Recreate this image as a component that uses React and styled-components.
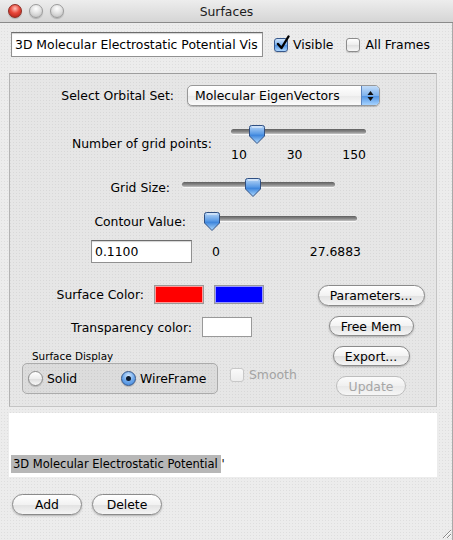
import React from 'react';
import styled, { createGlobalStyle } from 'styled-components';

const GlobalStyle = createGlobalStyle`
  html, body { margin: 0; padding: 0; background: #ececec; }
  body {
    font-family: "DejaVu Sans", Verdana, sans-serif;
    font-size: 12.4px;
    color: #000;
  }
  * { box-sizing: border-box; }
`;

const Window = styled.div`
  width: 453px;
  height: 540px;
  display: flex;
  flex-direction: column;
  position: relative;
  overflow: hidden;
  background-color: #ececec;
  background-image: radial-gradient(circle, rgba(0, 0, 0, 0.06) 0.6px, transparent 0.9px);
  background-size: 3px 3px;
  box-shadow: inset -1px 0 0 #a9a9a9;
`;

const TitleBar = styled.div`
  height: 23px;
  flex-shrink: 0;
  display: grid;
  grid-template-columns: 1fr auto 1fr;
  align-items: center;
  background: linear-gradient(#ededed, #d5d5d5);
  border-bottom: 1px solid #8a8a8a;
`;

const Lights = styled.div`
  display: flex;
  gap: 7px;
  padding-left: 8px;
`;

const Light = styled.span`
  width: 14px;
  height: 14px;
  border-radius: 50%;
  border: 1px solid ${p => (p.$red ? '#8d2b22' : '#9b9b9b')};
  background: ${p =>
    p.$red
      ? 'radial-gradient(circle at 50% 30%, #ffc2ba 0, #e8473a 45%, #a51d14 100%)'
      : 'radial-gradient(circle at 50% 30%, #ffffff 0, #e2e2e2 45%, #b9b9b9 100%)'};
  box-shadow: 0 1px 1px rgba(0, 0, 0, 0.2);
`;

const Title = styled.div`
  font-size: 12.4px;
  color: #1c1c1c;
`;

const Body = styled.div`
  flex: 1;
  display: flex;
  flex-direction: column;
  padding: 9px 16px 0 9px;
`;

const TopRow = styled.div`
  display: flex;
  align-items: center;
  height: 25px;
  padding-left: 2px;
`;

const TextField = styled.input`
  width: ${p => p.$w}px;
  height: ${p => p.$h}px;
  flex-shrink: 0;
  border: 1px solid #909090;
  border-top-color: #6c6c6c;
  box-shadow: inset 0 1px 1px rgba(0, 0, 0, 0.18);
  background: #fff;
  font: inherit;
  color: #000;
  padding: 0 3px;
  outline: none;
`;

const CheckLabel = styled.label`
  display: inline-flex;
  align-items: center;
  gap: 5px;
  margin-left: ${p => p.$ml || 0}px;
  color: ${p => (p.$disabled ? '#a3a3a3' : '#000')};
  white-space: nowrap;
`;

const Box = styled.span`
  width: 14px;
  height: 14px;
  position: relative;
  flex-shrink: 0;
  border-radius: 3px;
  border: 1px solid ${p => (p.$checked ? '#38598c' : p.$disabled ? '#c8c8c8' : '#8c8c8c')};
  background: ${p =>
    p.$checked
      ? 'linear-gradient(#cfe4fb, #79b0ee 50%, #4b8fe1 51%, #aed7ff)'
      : p.$disabled
      ? 'linear-gradient(#fafafa, #ededed)'
      : 'linear-gradient(#ffffff, #ececec 50%, #dfdfdf 51%, #f7f7f7)'};
  box-shadow: ${p => (p.$disabled ? 'none' : '0 1px 1px rgba(0,0,0,0.15)')};
`;

const Tick = styled.svg`
  position: absolute;
  left: 1px;
  top: -4px;
`;

function Check({ checked, disabled, children, ml }) {
  return (
    <CheckLabel $ml={ml} $disabled={disabled}>
      <Box $checked={checked} $disabled={disabled}>
        {checked && (
          <Tick width="14" height="16" viewBox="0 0 14 16">
            <path d="M2 9 L5.5 13 L12.5 1.5" fill="none" stroke="#000" strokeWidth="2.4" strokeLinecap="round" strokeLinejoin="round" />
          </Tick>
        )}
      </Box>
      {children}
    </CheckLabel>
  );
}

const GroupBox = styled.div`
  margin-top: 16px;
  width: 428px;
  height: 334px;
  flex-shrink: 0;
  display: flex;
  flex-direction: column;
  border: 1px solid #c4c4c4;
  border-top-color: #9d9d9d;
  border-left-color: #b3b3b3;
  background: rgba(0, 0, 0, 0.025);
`;

const FormRow = styled.div`
  display: flex;
  align-items: center;
  gap: ${p => p.$gap || 0}px;
  margin-top: ${p => p.$mt || 0}px;
  padding-left: ${p => p.$pl || 0}px;
`;

const Label = styled.span`
  width: ${p => p.$w}px;
  flex-shrink: 0;
  text-align: right;
  white-space: nowrap;
`;

const Popup = styled.div`
  width: 193px;
  height: 21px;
  display: flex;
  align-items: center;
  border: 1px solid #989898;
  border-radius: 5px;
  overflow: hidden;
  background: linear-gradient(#ffffff, #f3f3f3 50%, #e9e9e9 51%, #fbfbfb);
  box-shadow: 0 1px 1px rgba(0, 0, 0, 0.2);
`;

const PopupText = styled.span`
  flex: 1;
  padding-left: 7px;
  white-space: nowrap;
`;

const PopupArrows = styled.span`
  width: 18px;
  align-self: stretch;
  display: flex;
  align-items: center;
  justify-content: center;
  border-left: 1px solid #5d85bf;
  background: linear-gradient(#c2dcf8, #7fb3ee 50%, #4d91e2 51%, #a6d3ff);
`;

const SliderBox = styled.div`
  width: ${p => p.$w}px;
  flex-shrink: 0;
`;

const TrackArea = styled.div`
  position: relative;
  height: 19px;
  padding-top: 4px;
`;

const Track = styled.div`
  height: 5px;
  border-radius: 3px;
  background: linear-gradient(#5f5f5f, #8d8d8d 60%, #c4c4c4);
  box-shadow: 0 1px 0 rgba(255, 255, 255, 0.7);
`;

const Thumb = styled.svg`
  position: absolute;
  top: 0;
  left: ${p => p.$x - 8}px;
`;

const Ticks = styled.div`
  display: flex;
  justify-content: space-between;
  margin-top: 3px;
  line-height: 15px;
`;

function Slider({ width, pos, ticks }) {
  return (
    <SliderBox $w={width}>
      <TrackArea>
        <Track />
        <Thumb $x={pos} width="16" height="19" viewBox="0 0 16 19">
          <defs>
            <linearGradient id="thumbFill" x1="0" y1="0" x2="0" y2="1">
              <stop offset="0" stopColor="#bcd8f7" />
              <stop offset="0.45" stopColor="#5c9ce6" />
              <stop offset="0.55" stopColor="#3f86dc" />
              <stop offset="1" stopColor="#b2dcff" />
            </linearGradient>
          </defs>
          <path
            d="M2.5 0.5 H13.5 Q15.5 0.5 15.5 2.5 V11 L8 18.5 L0.5 11 V2.5 Q0.5 0.5 2.5 0.5 Z"
            fill="url(#thumbFill)"
            stroke="#2f4f82"
            strokeWidth="1"
          />
          <path d="M3 2 H13" stroke="rgba(255,255,255,0.8)" strokeWidth="1" />
        </Thumb>
      </TrackArea>
      {ticks && (
        <Ticks>
          {ticks.map(t => (
            <span key={t}>{t}</span>
          ))}
        </Ticks>
      )}
    </SliderBox>
  );
}

const Range = styled.div`
  width: 149px;
  display: flex;
  justify-content: space-between;
`;

const Lower = styled.div`
  display: flex;
  margin-top: 22px;
`;

const LeftCol = styled.div`
  width: 301px;
  display: flex;
  flex-direction: column;
`;

const RightCol = styled.div`
  width: 120px;
  display: flex;
  flex-direction: column;
  align-items: center;
  gap: 10px;
`;

const Swatch = styled.span`
  width: 50px;
  height: ${p => p.$h || 19}px;
  flex-shrink: 0;
  background: ${p => p.$color};
  border: 1px solid #999;
  box-shadow: inset 0 0 0 1px rgba(255, 255, 255, 0.6);
`;

const DisplayGroup = styled.div`
  display: flex;
  flex-direction: column;
`;

const Caption = styled.span`
  font-size: 10.4px;
  line-height: 13px;
  padding-left: 10px;
`;

const RadioBox = styled.div`
  width: 196px;
  height: 31px;
  display: flex;
  align-items: center;
  padding-left: 5px;
  border: 1px solid #ababab;
  border-radius: 5px;
  background: rgba(0, 0, 0, 0.045);
`;

const RadioOption = styled.label`
  display: inline-flex;
  align-items: center;
  gap: 4px;
  width: ${p => (p.$w ? `${p.$w}px` : 'auto')};
  white-space: nowrap;
`;

const RadioDot = styled.span`
  width: 15px;
  height: 15px;
  border-radius: 50%;
  flex-shrink: 0;
  display: flex;
  align-items: center;
  justify-content: center;
  border: 1px solid ${p => (p.$on ? '#34568a' : '#8a8a8a')};
  background: ${p =>
    p.$on
      ? 'radial-gradient(circle at 50% 30%, #d6e9fc 0, #6fa9ec 50%, #3c82d8 100%)'
      : 'linear-gradient(#ffffff, #ededed 50%, #dcdcdc 51%, #f8f8f8)'};
  box-shadow: 0 1px 1px rgba(0, 0, 0, 0.18);

  &::after {
    content: '';
    display: ${p => (p.$on ? 'block' : 'none')};
    width: 5px;
    height: 5px;
    border-radius: 50%;
    background: #0e1a2c;
  }
`;

const SmoothWrap = styled.div`
  align-self: flex-start;
  margin: 17px 0 0 12px;
`;

const AquaButton = styled.button`
  width: ${p => p.$w}px;
  height: ${p => p.$h || 20}px;
  flex-shrink: 0;
  padding: 0;
  font: inherit;
  color: ${p => (p.disabled ? '#a6a6a6' : '#000')};
  border-radius: 11px;
  border: 1px solid ${p => (p.disabled ? '#bdbdbd' : '#8a8a8a')};
  background: ${p =>
    p.disabled
      ? 'linear-gradient(#fbfbfb, #f0f0f0 50%, #e9e9e9 51%, #f6f6f6)'
      : 'linear-gradient(#ffffff, #f2f2f2 50%, #e1e1e1 51%, #f5f5f5)'};
  box-shadow: ${p => (p.disabled ? 'none' : '0 1px 2px rgba(0,0,0,0.25)')};
`;

const ListBox = styled.div`
  margin-top: 6px;
  width: 428px;
  height: 64px;
  flex-shrink: 0;
  display: flex;
  flex-direction: column;
  justify-content: flex-end;
  padding: 0 0 4px 2px;
  background: #fff;
`;

const ListItem = styled.div`
  font-size: 11.5px;
  line-height: 18px;
  white-space: pre;
`;

const Selected = styled.span`
  display: inline-block;
  white-space: pre;
  background: #b7b7b7;
  padding-left: 2px;
`;

const ButtonRow = styled.div`
  display: flex;
  gap: 10px;
  margin-top: 17px;
  padding-left: 3px;
`;

const Grip = styled.svg`
  position: absolute;
  right: 1px;
  bottom: 1px;
`;

export default function App() {
  return (
    <>
      <GlobalStyle />
      <Window>
        <TitleBar>
          <Lights>
            <Light $red />
            <Light />
            <Light />
          </Lights>
          <Title>Surfaces</Title>
          <span />
        </TitleBar>

        <Body>
          <TopRow>
            <TextField $w={252} $h={25} defaultValue="3D Molecular Electrostatic Potential Vis" />
            <Check checked ml={11}>Visible</Check>
            <Check ml={13}>All Frames</Check>
          </TopRow>

          <GroupBox>
            <FormRow $mt={11} $gap={13}>
              <Label $w={164}>Select Orbital Set:</Label>
              <Popup>
                <PopupText>Molecular EigenVectors</PopupText>
                <PopupArrows>
                  <svg width="7" height="12" viewBox="0 0 7 12">
                    <path d="M3.5 1 L6.5 5 H0.5 Z" fill="#111" />
                    <path d="M3.5 11 L6.5 7 H0.5 Z" fill="#111" />
                  </svg>
                </PopupArrows>
              </Popup>
            </FormRow>

            <FormRow $mt={19} $gap={19}>
              <Label $w={202}>Number of grid points:</Label>
              <Slider width={135} pos={26} ticks={['10', '30', '150']} />
            </FormRow>

            <FormRow $mt={16} $gap={12}>
              <Label $w={160}>Grid Size:</Label>
              <Slider width={153} pos={71} />
            </FormRow>

            <FormRow $mt={15} $gap={18}>
              <Label $w={176}>Contour Value:</Label>
              <Slider width={153} pos={8} />
            </FormRow>

            <FormRow $mt={9} $pl={81} $gap={20}>
              <TextField $w={101} $h={23} defaultValue="0.1100" />
              <Range>
                <span>0</span>
                <span>27.6883</span>
              </Range>
            </FormRow>

            <Lower>
              <LeftCol>
                <FormRow $gap={10}>
                  <Label $w={134}>Surface Color:</Label>
                  <Swatch $color="#ff0000" />
                  <Swatch $color="#0000ff" />
                </FormRow>
                <FormRow $mt={13} $gap={10}>
                  <Label $w={182}>Transparency color:</Label>
                  <Swatch $color="#ffffff" $h={20} />
                </FormRow>
                <FormRow $mt={13} $pl={12}>
                  <DisplayGroup>
                    <Caption>Surface Display</Caption>
                    <RadioBox>
                      <RadioOption $w={93}>
                        <RadioDot />
                        Solid
                      </RadioOption>
                      <RadioOption>
                        <RadioDot $on />
                        WireFrame
                      </RadioOption>
                    </RadioBox>
                  </DisplayGroup>
                  <SmoothWrap>
                    <Check disabled>Smooth</Check>
                  </SmoothWrap>
                </FormRow>
              </LeftCol>
              <RightCol>
                <AquaButton $w={107} $h={21}>Parameters...</AquaButton>
                <AquaButton $w={85}>Free Mem</AquaButton>
                <AquaButton $w={77}>Export...</AquaButton>
                <AquaButton $w={70} disabled>Update</AquaButton>
              </RightCol>
            </Lower>
          </GroupBox>

          <ListBox>
            <ListItem>
              <Selected>{'3D Molecular Electrostatic Potential '}</Selected>{"'"}
            </ListItem>
          </ListBox>

          <ButtonRow>
            <AquaButton $w={70} $h={21}>Add</AquaButton>
            <AquaButton $w={70} $h={21}>Delete</AquaButton>
          </ButtonRow>
        </Body>

        <Grip width="12" height="12" viewBox="0 0 12 12">
          <path d="M11 3 L3 11 M11 7 L7 11" stroke="#8a8a8a" strokeWidth="1" />
          <path d="M11 4 L4 11 M11 8 L8 11" stroke="#ffffff" strokeWidth="1" />
        </Grip>
      </Window>
    </>
  );
}
